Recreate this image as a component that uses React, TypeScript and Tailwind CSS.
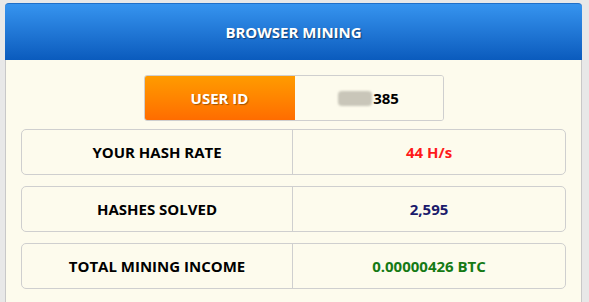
import React from "react"

const rows = [
  { label: "YOUR HASH RATE", value: "44 H/s", color: "text-[#ff1a1a]" },
  { label: "HASHES SOLVED", value: "2,595", color: "text-[#1a1a6b]" },
  { label: "TOTAL MINING INCOME", value: "0.00000426 BTC", color: "text-[#157a15]" },
]

export default function App() {
  return (
    <div className="h-[302px] overflow-hidden bg-[#e8e8e8] pt-[3px] font-['Open_Sans',sans-serif]">
      <div className="ml-[5px] w-[577px] h-[320px] rounded-t-[4px] border border-[#c8c8c8] bg-[#fdfbed]">
        {/* Header */}
        <div className="h-[57px] -mx-px -mt-px flex items-center justify-center rounded-t-[4px] border-t border-[#1f6fc8] bg-gradient-to-b from-[#3694ef] to-[#0a5bbd]">
          <span className="text-[15px] font-bold text-white [text-shadow:1px_1px_1px_rgba(0,0,0,0.45)]">BROWSER MINING</span>
        </div>

        {/* User ID */}
        <div className="mt-[15px] flex justify-center">
          <div className="flex h-[46px] w-[300px] overflow-hidden rounded-[3px] border border-[#cfcfcf]">
            <div className="flex w-[150px] items-center justify-center bg-gradient-to-b from-[#ff9b00] to-[#ff6c00] text-[15px] font-bold text-white [text-shadow:1px_1px_1px_rgba(0,0,0,0.35)]">
              USER ID
            </div>
            <div className="flex flex-1 items-center justify-center bg-[#fdfbed] text-[15px] font-bold text-black">
              <span className="mr-px inline-block h-[15px] w-[34px] rounded-sm bg-[#c9c6b9] blur-[1px]" />
              385
            </div>
          </div>
        </div>

        {/* Stats */}
        <div className="mt-[8px] flex flex-col gap-[11px] px-[15px]">
          {rows.map((r) => (
            <div key={r.label} className="flex h-[46px] rounded-[5px] border border-[#cfcfcf]">
              <div className="flex w-[271px] items-center justify-center border-r border-[#cfcfcf] text-[15px] font-bold text-black">
                {r.label}
              </div>
              <div className={`flex flex-1 items-center justify-center text-[15px] font-bold ${r.color}`}>
                {r.value}
              </div>
            </div>
          ))}
        </div>
      </div>
    </div>
  )
}
